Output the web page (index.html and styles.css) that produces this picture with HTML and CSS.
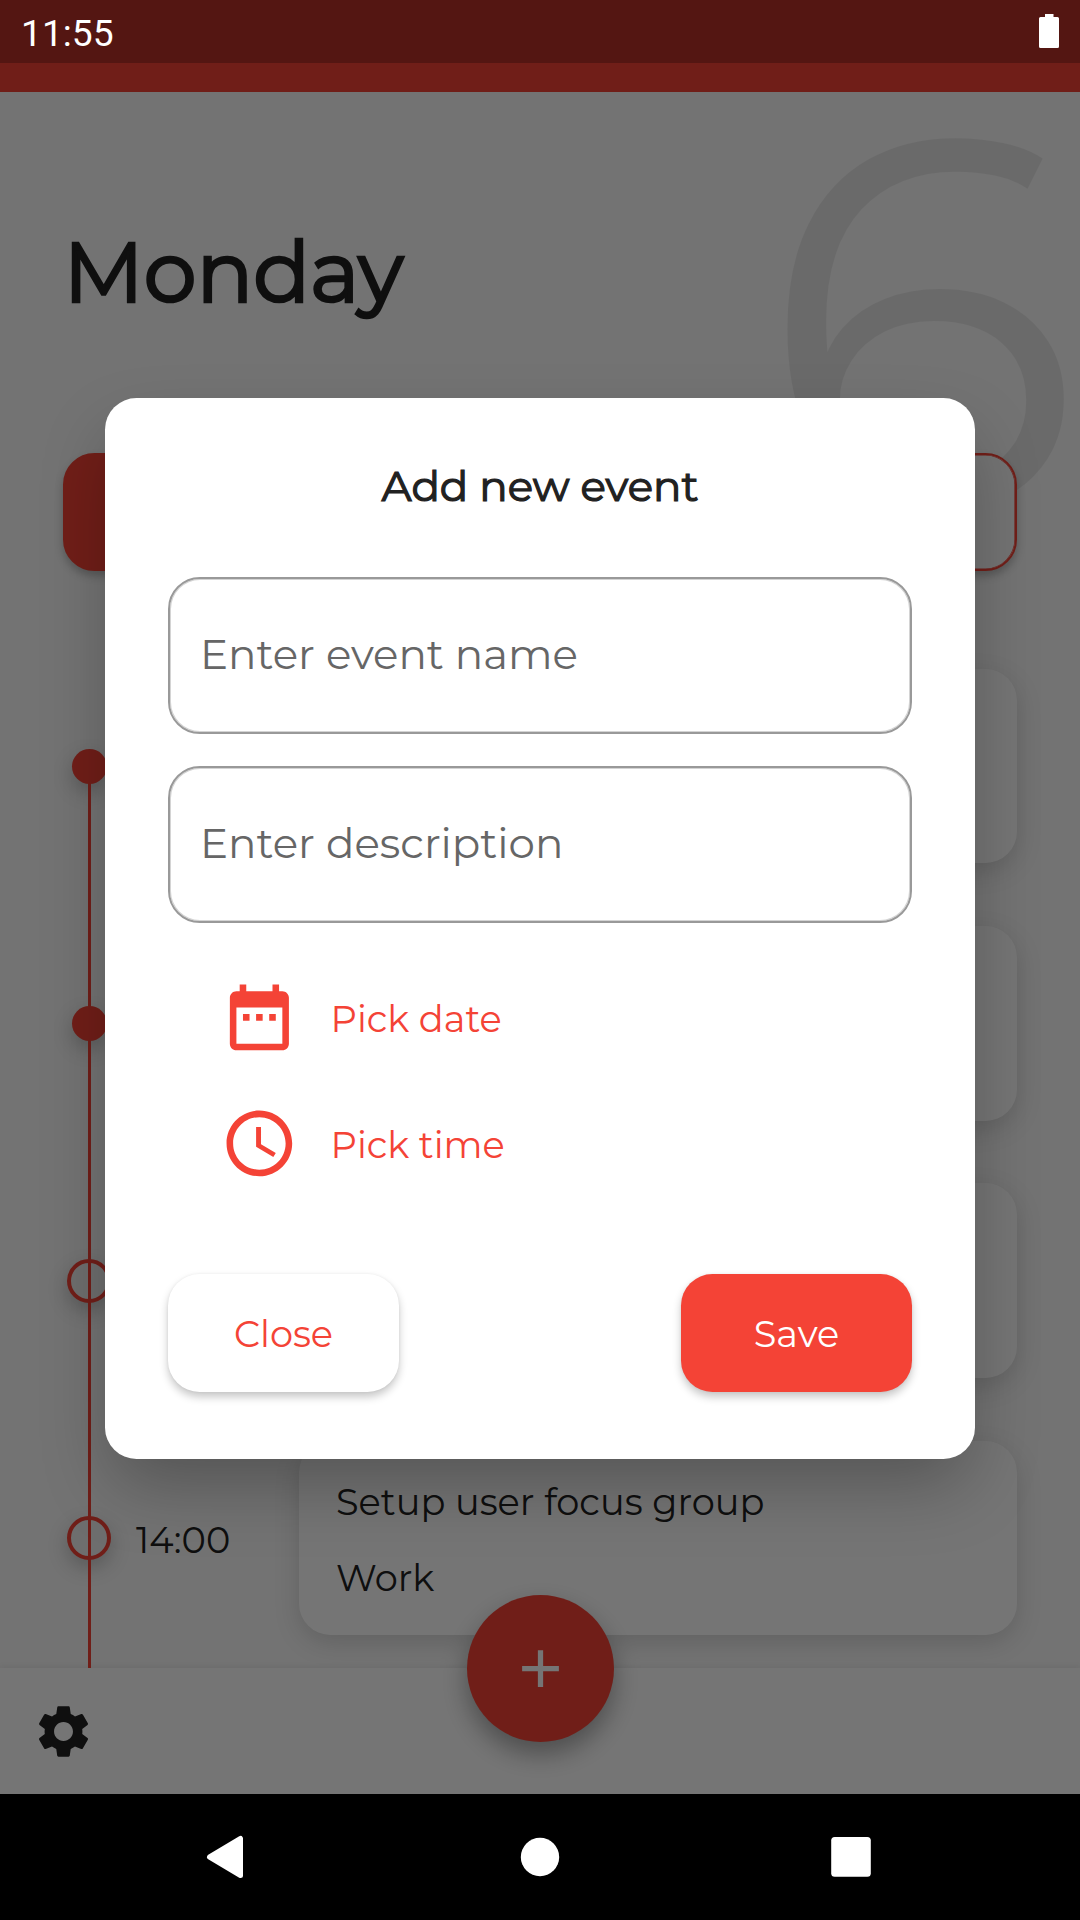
FILE: index.html
```
<!DOCTYPE html>
<html lang="en">
<head>
<meta charset="utf-8">
<title>Add new event</title>
<link rel="stylesheet" href="styles.css">
</head>
<body>
<div class="screen">
  <div class="app">
    <div class="app-bar"></div>
    <main class="page">
      <div class="day-number">6</div>
      <h1 class="day-name">Monday</h1>
      <div class="tabs">
        <div class="tab tab-active"></div>
        <div class="tab"></div>
      </div>
      <div class="timeline">
        <div class="line"></div>
        <div class="slot"><div class="marker"><i class="dot"></i></div><div class="time"></div><div class="card"></div></div>
        <div class="slot"><div class="marker"><i class="dot"></i></div><div class="time"></div><div class="card"></div></div>
        <div class="slot"><div class="marker"><i class="ring"></i></div><div class="time"></div><div class="card"></div></div>
        <div class="slot"><div class="marker"><i class="ring"></i></div><div class="time">14:00</div><div class="card"><p>Setup user focus group</p><p>Work</p></div></div>
      </div>
    </main>
    <footer class="bottom-bar">
      <svg class="gear" viewBox="0 0 24 24"><path d="M19.14 12.94c.04-.3.06-.61.06-.94 0-.32-.02-.64-.07-.94l2.03-1.58c.18-.14.23-.41.12-.61l-1.92-3.32c-.12-.22-.37-.29-.59-.22l-2.39.96c-.5-.38-1.03-.7-1.62-.94l-.36-2.54c-.04-.24-.24-.41-.48-.41h-3.84c-.24 0-.43.17-.47.41l-.36 2.54c-.59.24-1.13.57-1.62.94l-2.39-.96c-.22-.08-.47 0-.59.22L2.74 8.87c-.12.21-.08.47.12.61l2.03 1.58c-.05.3-.09.63-.09.94s.02.64.07.94l-2.03 1.58c-.18.14-.23.41-.12.61l1.92 3.32c.12.22.37.29.59.22l2.39-.96c.5.38 1.03.7 1.62.94l.36 2.54c.05.24.24.41.48.41h3.84c.24 0 .44-.17.47-.41l.36-2.54c.59-.24 1.13-.56 1.62-.94l2.39.96c.22.08.47 0 .59-.22l1.92-3.32c.12-.22.07-.47-.12-.61l-2.01-1.58zM12 15.6c-1.98 0-3.6-1.62-3.6-3.6s1.62-3.6 3.6-3.6 3.6 1.62 3.6 3.6-1.62 3.6-3.6 3.6z"/></svg>
      <div class="fab"><svg viewBox="0 0 24 24"><path d="M19 13h-6v6h-2v-6H5v-2h6V5h2v6h6v2z"/></svg></div>
    </footer>
  </div>

  <div class="overlay">
    <div class="scrim">
      <section class="dialog">
        <h2 class="dialog-title">Add new event</h2>
        <div class="field">Enter event name</div>
        <div class="field">Enter description</div>
        <div class="pickers">
          <div class="picker"><svg viewBox="0 0 24 24"><path d="M9 11H7v2h2v-2zm4 0h-2v2h2v-2zm4 0h-2v2h2v-2zm2-7h-1V2h-2v2H8V2H6v2H5c-1.11 0-1.99.9-1.99 2L3 20c0 1.1.89 2 2 2h14c1.1 0 2-.9 2-2V6c0-1.1-.9-2-2-2zm0 16H5V9h14v11z"/></svg><span>Pick date</span></div>
          <div class="picker"><svg viewBox="0 0 24 24"><path d="M11.99 2C6.47 2 2 6.48 2 12s4.47 10 9.99 10C17.52 22 22 17.52 22 12S17.52 2 11.99 2zM12 20c-4.42 0-8-3.58-8-8s3.58-8 8-8 8 3.58 8 8-3.58 8-8 8zm.5-13H11v6l5.25 3.15.75-1.23-4.5-2.67z"/></svg><span>Pick time</span></div>
        </div>
        <div class="actions">
          <div class="button">Close</div>
          <div class="button button-primary">Save</div>
        </div>
      </section>
      <div class="status-bar">
        <span>11:55</span>
        <svg class="battery" viewBox="0 0 20 34"><path d="M6 0h8.500v3H18.500a1.500 1.500 0 0 1 1.500 1.500V32.500a1.500 1.500 0 0 1-1.500 1.500H1.500A1.500 1.500 0 0 1 0 32.500V4.500A1.500 1.500 0 0 1 1.500 3H6z"/></svg>
      </div>
    </div>
    <nav class="nav-bar">
      <svg viewBox="0 0 60 60"><path d="M41.500 11.500V48.500L10.500 30z" stroke="#fff" stroke-width="5" stroke-linejoin="round"/></svg>
      <svg viewBox="0 0 60 60"><circle cx="30" cy="30" r="19.200"/></svg>
      <svg viewBox="0 0 60 60"><rect x="10.200" y="10" width="39.600" height="39.800" rx="3.500"/></svg>
    </nav>
  </div>
</div>
</body>
</html>
```
FILE: styles.css
```
* { box-sizing: border-box; margin: 0; padding: 0; }

body { width: 1080px; height: 1920px; overflow: hidden; }

.screen {
  position: relative;
  width: 1080px;
  height: 1920px;
  overflow: hidden;
  background: #000;
  font-family: "Montserrat", "Inter", sans-serif;
  font-size: 36.75px;
  font-weight: 375;
  line-height: 45px;
  color: #212121;
}

/* day view */
.app { display: flex; flex-direction: column; height: 1794px; background: #fafafa; }
.app-bar { flex: none; height: 91.5px; background: #f44336; }

.page {
  position: relative;
  flex: 1;
  min-height: 0;
  overflow: hidden;
  display: flex;
  flex-direction: column;
}

.day-number {
  position: absolute;
  top: 9px;
  right: 0;
  font-size: 525px;
  font-weight: 400;
  line-height: 440px;
  color: #e8e8e8;
}

.day-name {
  position: relative;
  flex: none;
  height: 361px;
  padding-left: 63.5px;
  font-size: 84px;
  font-weight: 400;
  line-height: 360px;
  -webkit-text-stroke: 2.6px #212121;
}

.tabs {
  position: relative;
  flex: none;
  display: flex;
  justify-content: space-between;
  padding: 0 63px;
}
.tab {
  width: 460px;
  height: 118px;
  border: 2px solid #f44336;
  border-radius: 31.5px;
  background: #fafafa;
  box-shadow: 0 5px 8px rgba(0, 0, 0, .24), inset 0 0 0 .6px #f44336;
}
.tab-active { background: #f44336; }

.timeline {
  position: relative;
  flex: none;
  display: flex;
  flex-direction: column;
  padding-top: 67px;
}
.slot {
  flex: none;
  display: flex;
  align-items: center;
  height: 257.25px;
  padding-right: 63px;
}
.marker { flex: none; display: flex; justify-content: center; width: 178px; }
.line {
  position: absolute;
  left: 88px;
  top: 195px;
  width: 2.6px;
  height: 920px;
  background: #f44336;
  z-index: 1;
}
.dot, .ring { display: block; border-radius: 50%; box-shadow: 0 8px 20px rgba(0, 0, 0, .22); }
.dot { width: 35px; height: 35px; background: #f44336; }
.ring { width: 44px; height: 44px; border: 4px solid #f44336; background: #f0f0f0; }
.time { flex: none; width: 163px; margin-left: -42px; padding-top: 5px; line-height: 48px; }
.card {
  flex: 1;
  display: flex;
  flex-direction: column;
  justify-content: center;
  gap: 31px;
  height: 194.5px;
  padding: 3px 37px 0;
  border-radius: 31.5px;
  background: #fff;
  box-shadow: 0 8px 26px rgba(0, 0, 0, .15);
}

.bottom-bar {
  position: relative;
  flex: none;
  display: flex;
  align-items: center;
  height: 126px;
  padding-left: 31.5px;
  background: #fff;
  box-shadow: 0 -1px 6px rgba(0, 0, 0, .08);
}
.gear { width: 63px; height: 63px; fill: #212121; }
.fab {
  position: absolute;
  top: -73.5px;
  left: 466.5px;
  display: flex;
  align-items: center;
  justify-content: center;
  width: 147px;
  height: 147px;
  border-radius: 50%;
  background: #f44336;
  box-shadow: 0 12px 26px rgba(0, 0, 0, .34);
}
.fab svg { width: 63px; height: 63px; fill: #fff; }

/* modal layer */
.overlay { position: absolute; inset: 0; z-index: 2; display: flex; flex-direction: column; }
.scrim {
  position: relative;
  flex: 1;
  display: flex;
  justify-content: center;
  align-items: center;
  padding-top: 63px;
  background: rgba(0, 0, 0, .54);
}
.dialog {
  width: 870px;
  height: 1061px;
  padding: 62px 63px 0;
  border-radius: 31.5px;
  background: #fff;
  box-shadow: 0 32px 70px -8px rgba(0, 0, 0, .28);
}
.dialog-title {
  height: 117px;
  font-size: 42px;
  font-weight: 400;
  line-height: 52px;
  text-align: center;
  -webkit-text-stroke: 1.2px #212121;
}
.field {
  height: 157px;
  margin-bottom: 32px;
  padding-left: 30px;
  border: 2px solid #999;
  border-radius: 32px;
  box-shadow: inset 0 0 0 1px #d4d4d4;
  font-size: 42px;
  line-height: 151px;
  color: #666;
}
.pickers { padding-left: 52.25px; }
.picker { display: flex; align-items: center; gap: 31.5px; height: 126px; color: #f44336; }
.picker svg { width: 78.75px; height: 78.75px; margin-bottom: 1.5px; fill: #f44336; }
.actions { display: flex; justify-content: space-between; padding-top: 67px; }
.button {
  width: 231px;
  height: 118px;
  border-radius: 31.5px;
  background: #fff;
  box-shadow: 0 5px 8px rgba(0, 0, 0, .22), 0 0 3px rgba(0, 0, 0, .06);
  line-height: 119px;
  text-align: center;
  color: #f44336;
}
.button-primary { background: #f44336; color: #fff; }

/* system bars */
.status-bar {
  position: absolute;
  inset: 0 0 auto;
  display: flex;
  justify-content: space-between;
  height: 63px;
  padding: 0 21px;
  background: rgba(0, 0, 0, .25);
  font-family: Roboto, sans-serif;
  font-size: 37.2px;
  font-weight: 400;
  line-height: 67px;
  color: #fff;
}
.battery { width: 20px; height: 34px; margin-top: 14px; fill: #fff; }

.nav-bar {
  flex: none;
  display: flex;
  justify-content: center;
  align-items: center;
  gap: 251px;
  height: 126px;
  background: #000;
}
.nav-bar svg { width: 60px; height: 60px; fill: #fff; }
```
